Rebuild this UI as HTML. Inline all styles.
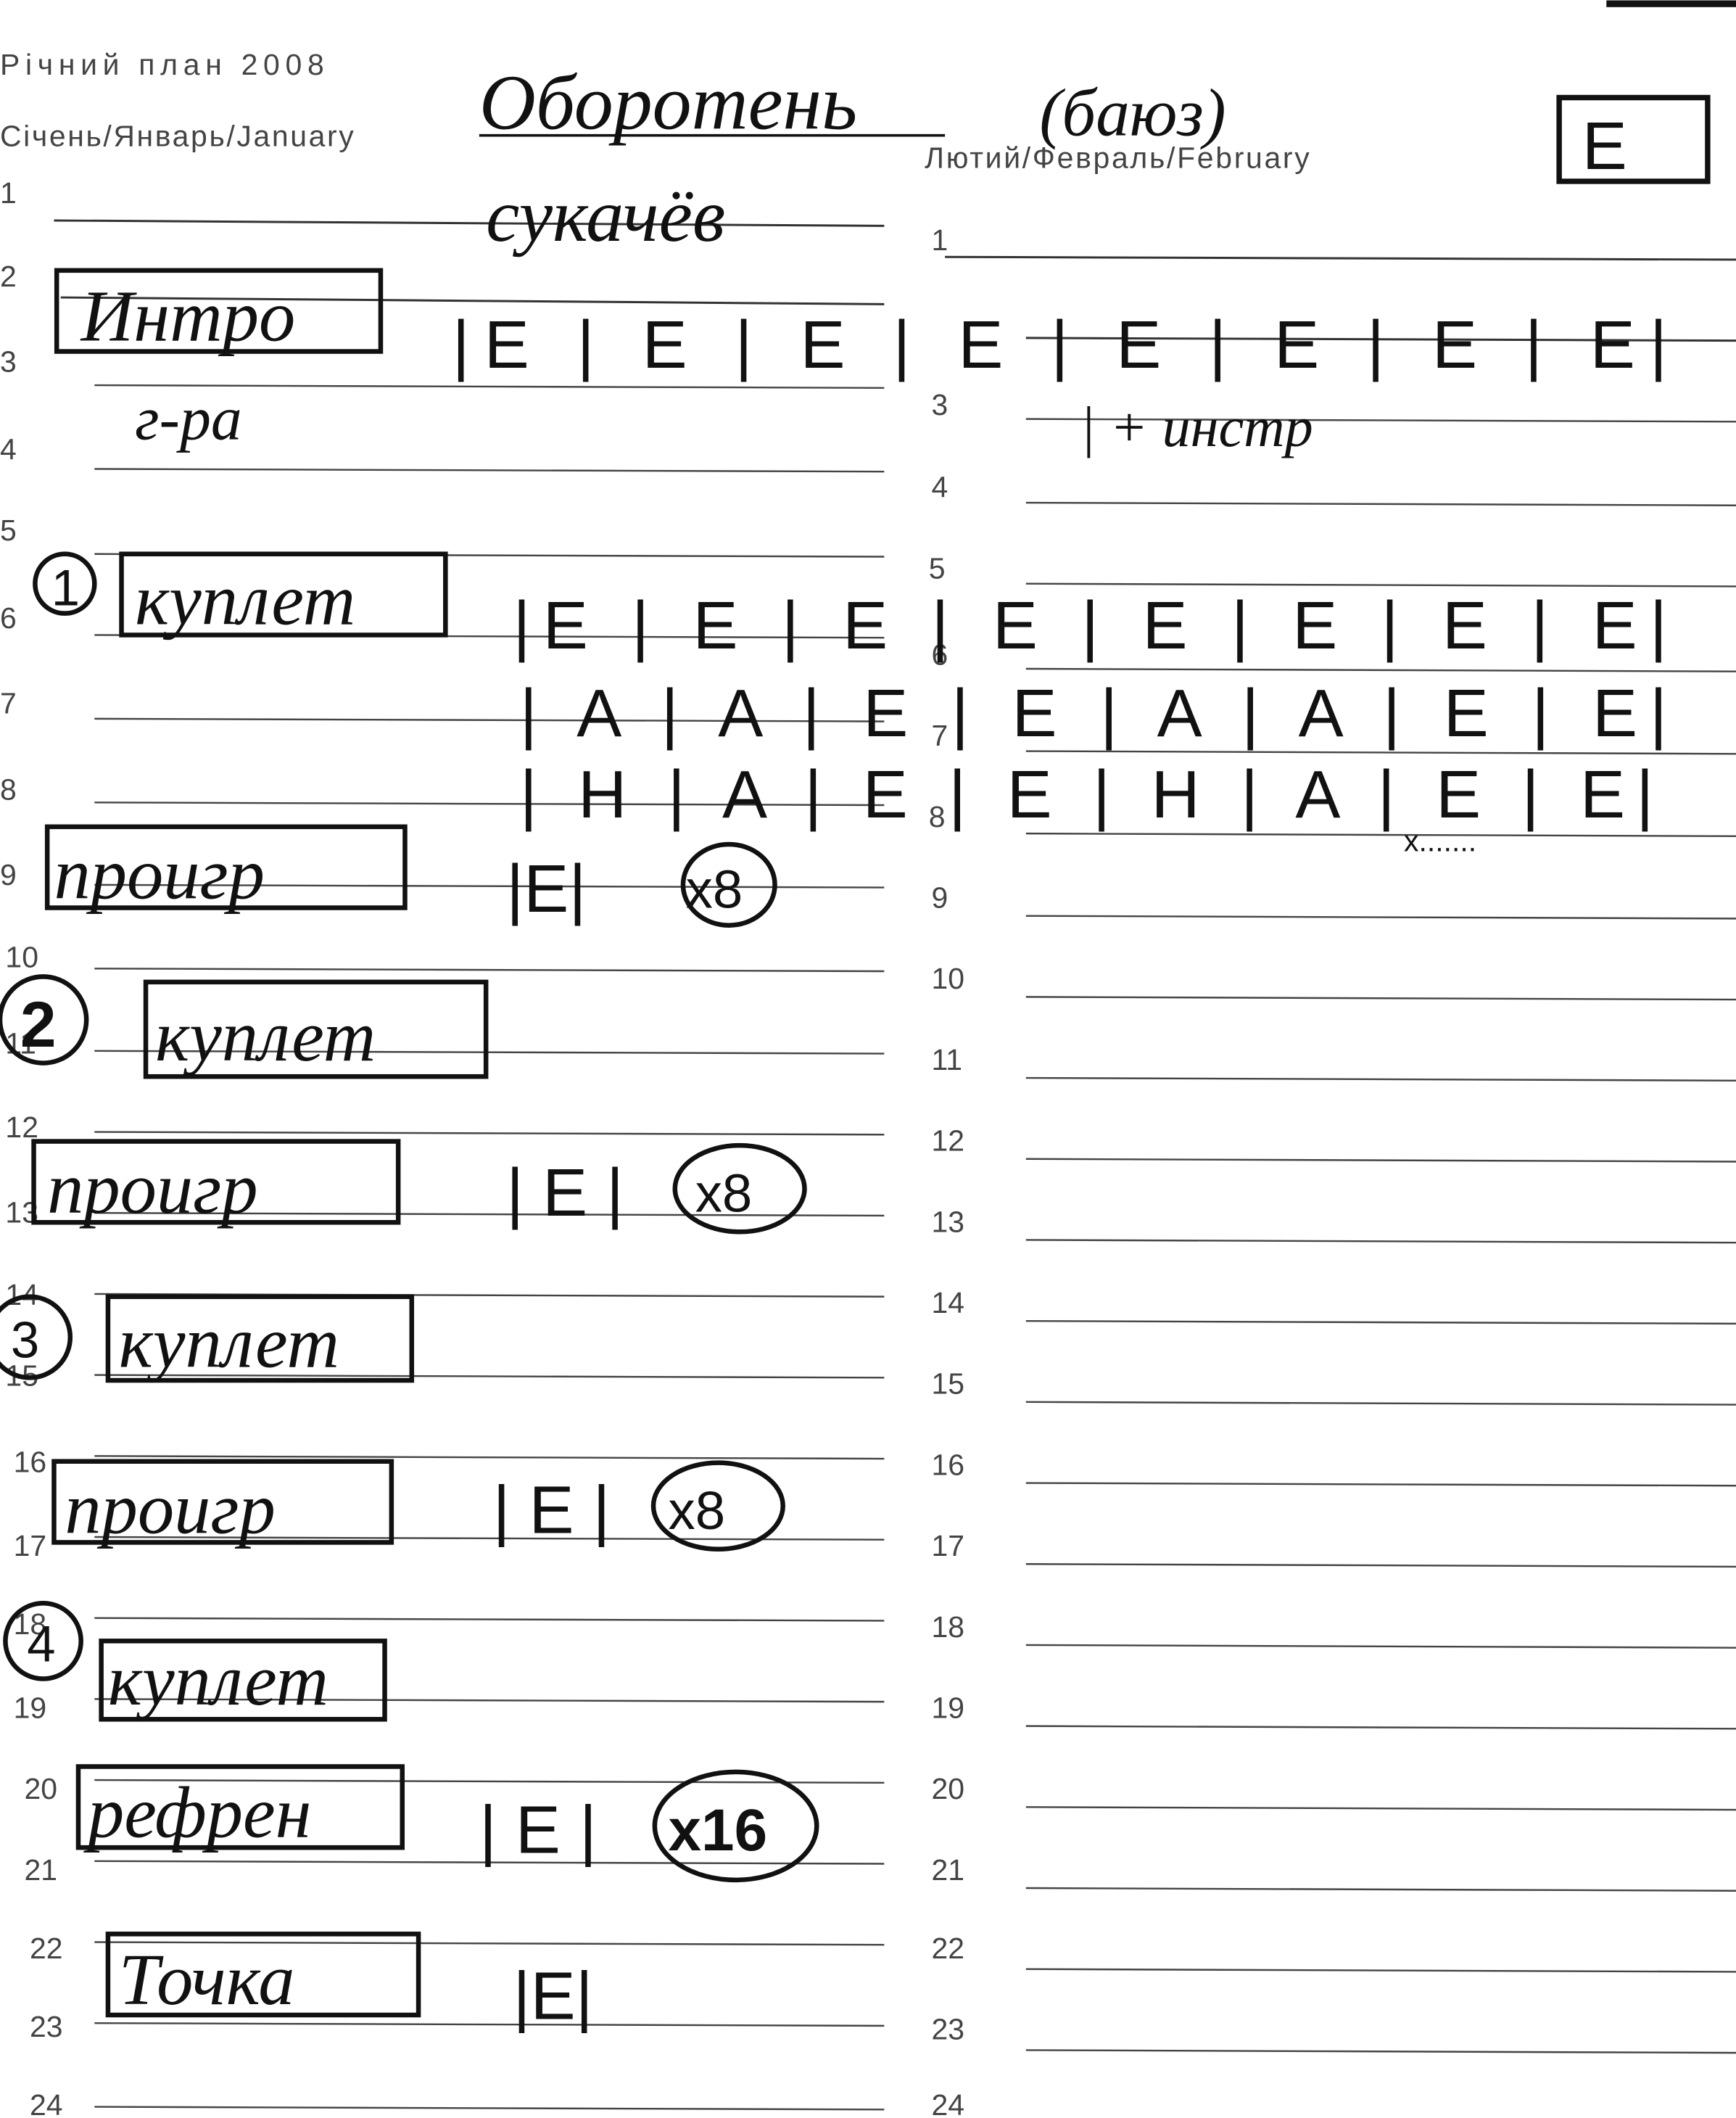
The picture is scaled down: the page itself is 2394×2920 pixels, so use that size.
<!DOCTYPE html>
<html><head><meta charset="utf-8"><style>
html,body{margin:0;padding:0;background:#fff;}
svg{display:block}
.p{font-family:"Liberation Sans",sans-serif;fill:#444;font-size:22px}
.h{font-family:"Liberation Serif","DejaVu Serif",serif;font-style:italic;fill:#111;}
.c{font-family:"Liberation Sans",sans-serif;fill:#111;font-size:50px}
</style></head><body>
<svg width="2394" height="2920" viewBox="0 0 1286 1568" xmlns="http://www.w3.org/2000/svg">
<rect width="1286" height="1568" fill="#fff"/>
<rect x="1190" y="0" width="96" height="5" fill="#111"/>
<text class="p" x="0" y="55" font-size="24" textLength="240" lengthAdjust="spacing">Річний план 2008</text>
<text class="p" x="0" y="108" font-size="20" textLength="262" lengthAdjust="spacing">Січень/Январь/January</text>
<text class="p" x="685" y="124" font-size="20" textLength="285" lengthAdjust="spacing">Лютий/Февраль/February</text>
<g stroke="#333" stroke-width="1.6">
<line x1="40" y1="163" x2="655" y2="167"/><line x1="700" y1="190" x2="1286" y2="192"/>
<line x1="45" y1="220" x2="655" y2="225"/><line x1="760" y1="250" x2="1286" y2="252"/>
</g>
<g stroke="#444" stroke-width="1.3">
<line x1="70" y1="285" x2="655" y2="287"/>
<line x1="70" y1="347" x2="655" y2="349"/>
<line x1="70" y1="410" x2="655" y2="412"/>
<line x1="70" y1="470" x2="655" y2="472"/>
<line x1="70" y1="532" x2="655" y2="534"/>
<line x1="70" y1="594" x2="655" y2="596"/>
<line x1="70" y1="655" x2="655" y2="657"/>
<line x1="70" y1="717" x2="655" y2="719"/>
<line x1="70" y1="778" x2="655" y2="780"/>
<line x1="70" y1="838" x2="655" y2="840"/>
<line x1="70" y1="898" x2="655" y2="900"/>
<line x1="70" y1="958" x2="655" y2="960"/>
<line x1="70" y1="1018" x2="655" y2="1020"/>
<line x1="70" y1="1078" x2="655" y2="1080"/>
<line x1="70" y1="1138" x2="655" y2="1140"/>
<line x1="70" y1="1198" x2="655" y2="1200"/>
<line x1="70" y1="1258" x2="655" y2="1260"/>
<line x1="70" y1="1318" x2="655" y2="1320"/>
<line x1="70" y1="1378" x2="655" y2="1380"/>
<line x1="70" y1="1438" x2="655" y2="1440"/>
<line x1="70" y1="1498" x2="655" y2="1500"/>
<line x1="70" y1="1560" x2="655" y2="1562"/>
</g>
<g stroke="#444" stroke-width="1.3">
<line x1="760" y1="310" x2="1286" y2="312"/><line x1="760" y1="372" x2="1286" y2="374"/>
<line x1="760" y1="432" x2="1286" y2="434"/><line x1="760" y1="495" x2="1286" y2="497"/>
<line x1="760" y1="556" x2="1286" y2="558"/><line x1="760" y1="617" x2="1286" y2="619"/>
<line x1="760" y1="678" x2="1286" y2="680"/><line x1="760" y1="738" x2="1286" y2="740"/>
<line x1="760" y1="798" x2="1286" y2="800"/><line x1="760" y1="858" x2="1286" y2="860"/>
<line x1="760" y1="918" x2="1286" y2="920"/><line x1="760" y1="978" x2="1286" y2="980"/>
<line x1="760" y1="1038" x2="1286" y2="1040"/><line x1="760" y1="1098" x2="1286" y2="1100"/>
<line x1="760" y1="1158" x2="1286" y2="1160"/><line x1="760" y1="1218" x2="1286" y2="1220"/>
<line x1="760" y1="1278" x2="1286" y2="1280"/><line x1="760" y1="1338" x2="1286" y2="1340"/>
<line x1="760" y1="1398" x2="1286" y2="1400"/><line x1="760" y1="1458" x2="1286" y2="1460"/>
<line x1="760" y1="1518" x2="1286" y2="1520"/>
</g>
<g class="p">
<text x="0" y="150">1</text><text x="0" y="212">2</text><text x="0" y="275">3</text><text x="0" y="340">4</text>
<text x="0" y="400">5</text><text x="0" y="465">6</text><text x="0" y="528">7</text><text x="0" y="592">8</text>
<text x="0" y="655">9</text><text x="4" y="716">10</text><text x="4" y="780">11</text><text x="4" y="842">12</text>
<text x="4" y="905">13</text><text x="4" y="966">14</text><text x="4" y="1026">15</text><text x="10" y="1090">16</text>
<text x="10" y="1152">17</text><text x="10" y="1210">18</text><text x="10" y="1272">19</text><text x="18" y="1332">20</text>
<text x="18" y="1392">21</text><text x="22" y="1450">22</text><text x="22" y="1508">23</text><text x="22" y="1566">24</text>
<text x="690" y="185">1</text><text x="690" y="307">3</text><text x="690" y="368">4</text><text x="688" y="428">5</text>
<text x="690" y="492">6</text><text x="690" y="552">7</text><text x="688" y="612">8</text><text x="690" y="672">9</text>
<text x="690" y="732">10</text><text x="690" y="792">11</text><text x="690" y="852">12</text><text x="690" y="912">13</text>
<text x="690" y="972">14</text><text x="690" y="1032">15</text><text x="690" y="1092">16</text><text x="690" y="1152">17</text>
<text x="690" y="1212">18</text><text x="690" y="1272">19</text><text x="690" y="1332">20</text><text x="690" y="1392">21</text>
<text x="690" y="1450">22</text><text x="690" y="1510">23</text><text x="690" y="1566">24</text>
</g>
<g class="h">
<text x="355" y="95" font-size="58">Оборотень</text><text x="770" y="100" font-size="50">(баюз)</text>
<text x="360" y="178" font-size="56">сукачёв</text>
<text x="100" y="325" font-size="46">г-ра</text>
<text x="800" y="330" font-size="42">| + инстр</text>
</g>
<line x1="355" y1="100" x2="700" y2="100" stroke="#111" stroke-width="2"/>
<rect x="1155" y="72" width="110" height="62" fill="none" stroke="#111" stroke-width="4"/>
<text class="c" x="1172" y="125" font-size="56">E</text>
<g fill="none" stroke="#111" stroke-width="3.5">
<rect x="42" y="200" width="240" height="60"/>
<rect x="90" y="410" width="240" height="60"/>
<rect x="35" y="612" width="265" height="60"/>
<rect x="108" y="727" width="252" height="70"/>
<rect x="25" y="845" width="270" height="60"/>
<rect x="80" y="960" width="225" height="62"/>
<rect x="40" y="1082" width="250" height="60"/>
<rect x="75" y="1215" width="210" height="58"/>
<rect x="58" y="1308" width="240" height="60"/>
<rect x="80" y="1432" width="230" height="60"/>
<circle cx="48" cy="432" r="22"/>
<ellipse cx="540" cy="655" rx="34" ry="30"/>
<circle cx="32" cy="755" r="32"/>
<ellipse cx="548" cy="880" rx="48" ry="32"/>
<circle cx="22" cy="990" r="30"/>
<ellipse cx="532" cy="1115" rx="48" ry="32"/>
<circle cx="32" cy="1215" r="28"/>
<ellipse cx="545" cy="1352" rx="60" ry="40"/>
</g>
<g class="h" font-size="54">
<text x="60" y="252">Интро</text>
<text x="100" y="462">куплет</text>
<text x="40" y="665">проигр</text>
<text x="115" y="785">куплет</text>
<text x="35" y="898">проигр</text>
<text x="88" y="1012">куплет</text>
<text x="48" y="1135">проигр</text>
<text x="80" y="1262">куплет</text>
<text x="65" y="1360">рефрен</text>
<text x="88" y="1484">Точка</text>
</g>
<g class="c">
<text x="38" y="448" font-size="38">1</text>
<text x="15" y="775" font-size="48" font-weight="bold">2</text>
<text x="8" y="1005" font-size="38">3</text>
<text x="20" y="1230" font-size="38">4</text>
<text x="335" y="272" textLength="900" lengthAdjust="spacing">|E | E | E | E | E | E | E | E|</text>
<text x="380" y="480" textLength="855" lengthAdjust="spacing">|E | E | E | E | E | E | E | E|</text>
<text x="385" y="545" textLength="850" lengthAdjust="spacing">| A | A | E | E | A | A | E | E|</text>
<text x="385" y="605" textLength="840" lengthAdjust="spacing">| H | A | E | E | H | A | E | E|</text>
<text x="375" y="675">|E|</text><text x="508" y="672" font-size="40">x8</text>
<text x="375" y="900">| E |</text><text x="515" y="897" font-size="40">x8</text>
<text x="365" y="1135">| E |</text><text x="495" y="1132" font-size="40">x8</text>
<text x="355" y="1372">| E |</text><text x="495" y="1370" font-size="44" font-weight="bold">x16</text>
<text x="380" y="1495">|E|</text>
<text x="1040" y="630" font-size="22">x.......</text>
</g>
</svg>
</body></html>
